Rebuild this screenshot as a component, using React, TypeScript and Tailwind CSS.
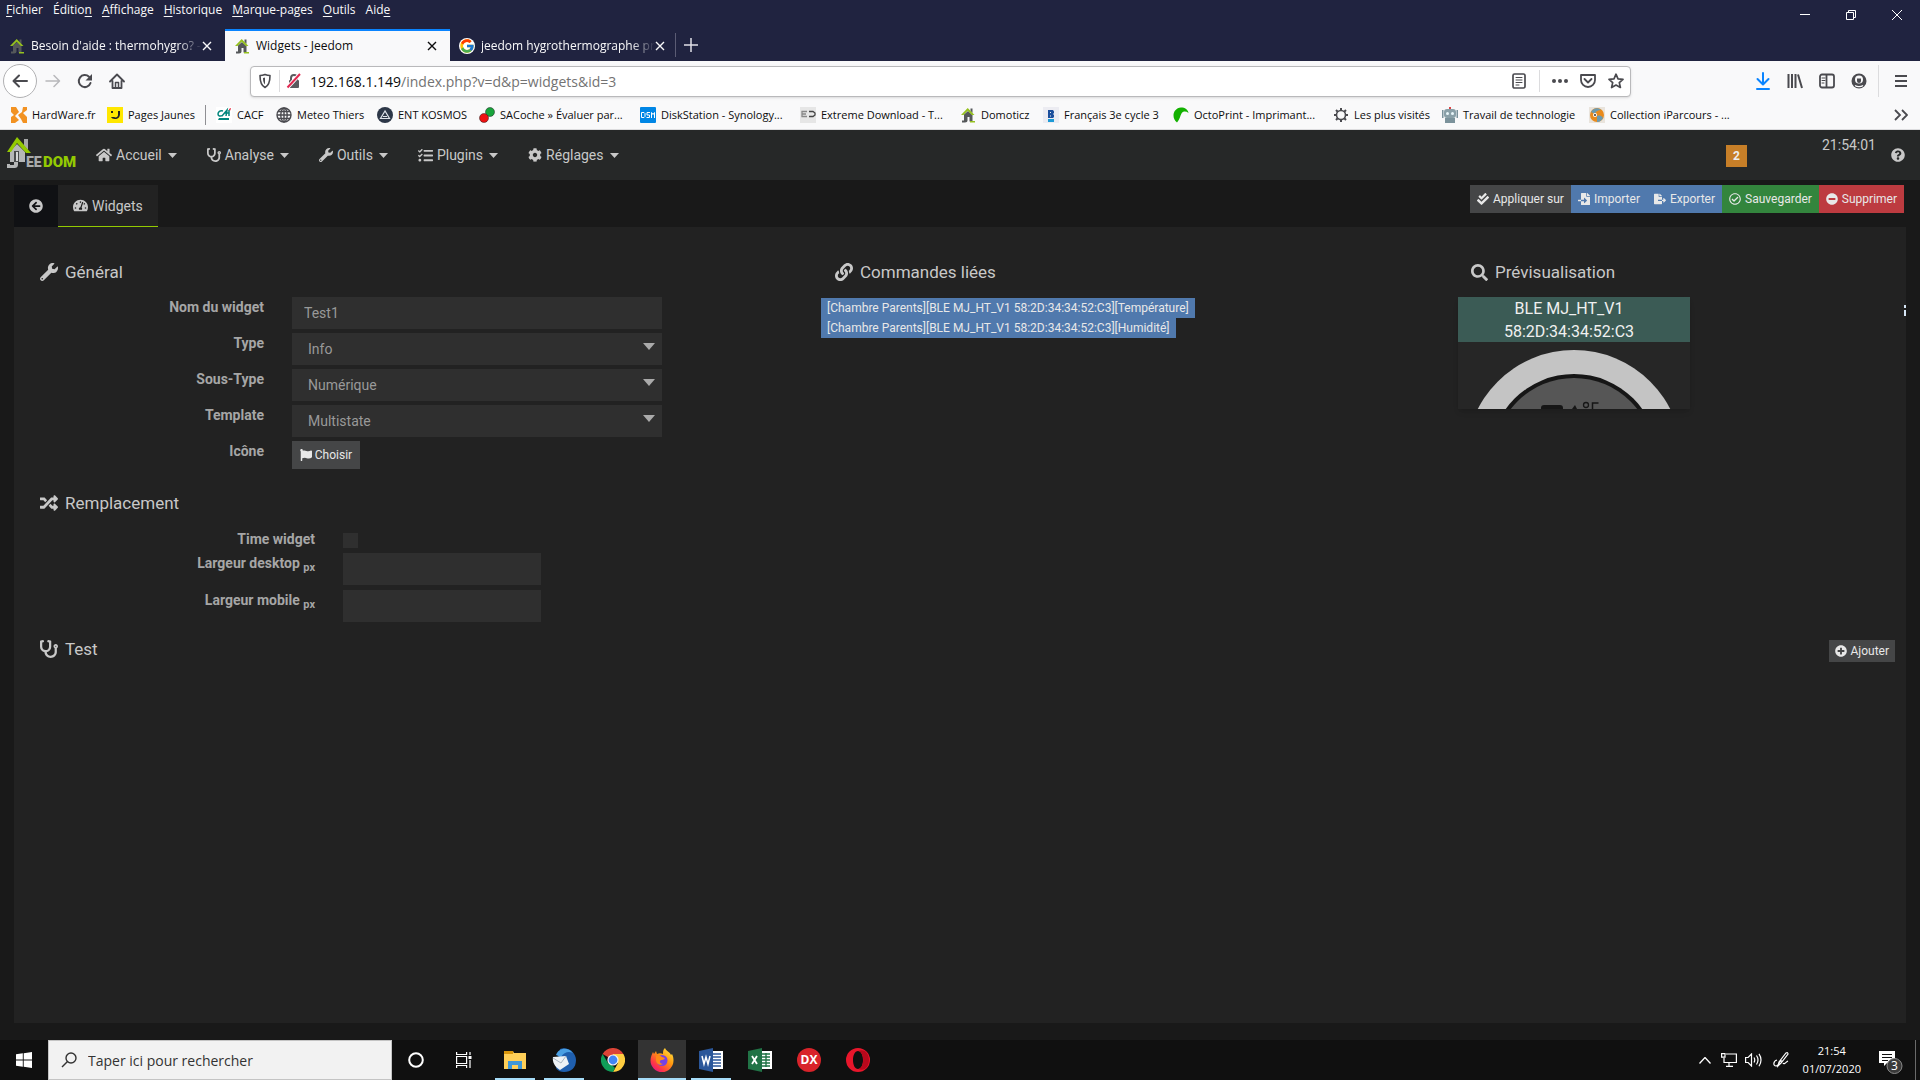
import type { ReactNode } from 'react'
import {
  FaArrowCircleLeft, FaCheckDouble, FaCog, FaFileExport, FaFileImport, FaFlag, FaHome, FaLink, FaMinusCircle,
  FaPlusCircle, FaQuestionCircle, FaRandom, FaRegCheckCircle, FaSearch, FaStethoscope, FaTachometerAlt, FaTasks, FaWrench,
} from 'react-icons/fa'
import { FcGoogle } from 'react-icons/fc'

const ui = "font-['Open_Sans','Noto_Sans',sans-serif]"
const roboto = "font-['Roboto',sans-serif]"
const field = 'h-8 bg-[#2f2f2f] text-sm text-[#999] outline-none'
const label = 'pt-0.5 text-right text-sm leading-4 font-bold text-[#a6a6a6]'
const svgLine = { fill: 'none', stroke: 'currentColor', strokeWidth: 2, strokeLinecap: 'round', strokeLinejoin: 'round' } as const

/* ---------- small drawings ---------- */

function JeedomHouse() {
  return (
    <svg width="16" height="16" viewBox="0 0 16 16" className="shrink-0">
      <path d="M10.5 1.5h2V6l-2-2z" fill="#55585a" />
      <path d="M4 7.5 8 4l4.5 4v6.5H9.5V10h-2v3.5c0 1.3-1 2-2.5 2H2v-2h2z" fill="#55585a" />
      <path d="M1 8 7.7 1l6.8 7h-2.6L7.7 3.8 3.5 8z" fill="#95c11f" />
      <path d="M10 14h5v1.5h-5z" fill="#95c11f" />
    </svg>
  )
}

function JeedomLogo() {
  return (
    <svg width="70" height="42" viewBox="0 0 70 42" role="img" aria-label="Jeedom">
      <path d="M18 5h4v11l-4-4z" fill="#a6a8a8" />
      <path d="M4 17 11 10l8 8v10H4z" fill="#b5b7b7" />
      <path d="M8 17h5v11H8z" fill="#4a4c4c" />
      <path d="M10 18h2v9h-2z" fill="#d5d7d7" />
      <path d="M8 28h4v2c0 3-1 4-4 4H1v-4h3v1h3c1 0 1-.5 1-1z" fill="#b5b7b7" />
      <path d="M1 18 11 3l14 16h-5l-9-10-6 9z" fill="#93ca02" />
      <text x="20" y="33" fontSize="14" fontWeight="900" fontFamily="Roboto, sans-serif" fill="#a9abab">EE</text>
      <text x="37" y="33" fontSize="15" fontWeight="900" fontFamily="Roboto, sans-serif" fill="#93ca02">DOM</text>
    </svg>
  )
}

function CloseIcon() {
  return (
    <svg width="10" height="10" viewBox="0 0 10 10">
      <path d="M1 1l8 8M9 1 1 9" stroke="currentColor" strokeWidth="1.4" fill="none" />
    </svg>
  )
}

/* ---------- Firefox window ---------- */

const menus = [
  ['', 'F', 'ichier'], ['Éditio', 'n', ''], ['', 'A', 'ffichage'], ['', 'H', 'istorique'],
  ['', 'M', 'arque-pages'], ['', 'O', 'utils'], ['Aid', 'e', ''],
]

function TitleBar() {
  return (
    <div className="flex h-[29px] items-start justify-between pl-1.5">
      <nav className="flex gap-2.5 pt-0.5 text-[12px] leading-4 text-[#f9f9fa]">
        {menus.map(([a, b, c]) => (
          <button key={a + b + c} type="button">{a}<u className="underline-offset-2">{b}</u>{c}</button>
        ))}
      </nav>
      <div className="flex text-white">
        <button type="button" aria-label="Réduire" className="flex h-[29px] w-[46px] items-center justify-center">
          <svg width="10" height="10" viewBox="0 0 10 10"><path d="M0 4.5h10" stroke="currentColor" /></svg>
        </button>
        <button type="button" aria-label="Restaurer" className="flex h-[29px] w-[46px] items-center justify-center">
          <svg width="10" height="10" viewBox="0 0 10 10"><path d="M.5 2.5h7v7h-7zM2.5 2.5v-2h7v7h-2" fill="none" stroke="currentColor" /></svg>
        </button>
        <button type="button" aria-label="Fermer" className="flex h-[29px] w-[46px] items-center justify-center">
          <svg width="10" height="10" viewBox="0 0 10 10"><path d="M0 0l10 10M10 0 0 10" stroke="currentColor" /></svg>
        </button>
      </div>
    </div>
  )
}

function Tab({ icon, title, active }: { icon: ReactNode; title: string; active?: boolean }) {
  return (
    <div className={`flex h-8 w-[225px] items-center border-t-2 pr-[13px] pl-[9px] text-[12px] ${active ? 'border-[#0a84ff] bg-[#f9f9fa] text-[#0c0c0d]' : 'border-transparent text-[#f9f9fa]'}`}>
      {icon}
      <span className={`ml-1.5 flex-1 whitespace-nowrap ${active ? '' : '[mask-image:linear-gradient(to_left,transparent,black_24px)]'}`}>{title}</span>
      <button type="button" aria-label="Fermer l'onglet"><CloseIcon /></button>
    </div>
  )
}

function TabStrip() {
  return (
    <div className="flex h-8 items-center">
      <Tab icon={<JeedomHouse />} title="Besoin d'aide : thermohygro? -" />
      <Tab icon={<JeedomHouse />} title="Widgets - Jeedom" active />
      <Tab icon={<FcGoogle size={16} className="shrink-0 rounded-full bg-white" />} title="jeedom hygrothermographe pr" />
      <div className="h-6 w-px bg-[#5b5c74]" />
      <button type="button" aria-label="Nouvel onglet" className="px-2 text-[#e0e0e6]">
        <svg width="14" height="14" viewBox="0 0 14 14"><path d="M7 0v14M0 7h14" stroke="currentColor" strokeWidth="1.5" /></svg>
      </button>
    </div>
  )
}

function NavBar() {
  return (
    <div className="flex h-10 items-center bg-[#f9f9fa] text-[#4a4a4f]">
      <div className="flex w-[250px] shrink-0 items-center pl-[3px]">
        <button type="button" aria-label="Précédent" className="flex size-[34px] items-center justify-center rounded-full border border-[#b1b1b3] bg-white">
          <svg width="16" height="16" viewBox="0 0 16 16" {...svgLine}><path d="M15 8H2M7 2.5 1.5 8 7 13.5" /></svg>
        </button>
        <button type="button" aria-label="Suivant" className="flex w-8 items-center justify-center text-[#b8b8bb]">
          <svg width="16" height="16" viewBox="0 0 16 16" {...svgLine} strokeWidth="1.5"><path d="M1 8h13M9 2.5 14.5 8 9 13.5" /></svg>
        </button>
        <button type="button" aria-label="Actualiser" className="flex w-8 items-center justify-center">
          <svg width="16" height="16" viewBox="0 0 16 16" {...svgLine}><path d="M13.5 10A6 6 0 1 1 12 3.8" /><path d="M15 1v6.5H8.5z" fill="currentColor" stroke="none" /></svg>
        </button>
        <button type="button" aria-label="Accueil" className="flex w-8 items-center justify-center">
          <svg width="16" height="16" viewBox="0 0 16 16" {...svgLine} strokeWidth="1.8"><path d="M1 8.5 8 1.5l7 7M3.5 8v7h9V8" /><path d="M6.5 14V9.5h3V14" strokeWidth="1.5" /></svg>
        </button>
      </div>

      <div className="flex h-[31px] flex-1 items-center rounded-sm border border-[#b9b9bb] bg-white shadow-sm">
        <svg width="16" height="16" viewBox="0 0 16 16" {...svgLine} strokeWidth="1.6" className="ml-1.5">
          <path d="M8 1.5c2 .8 3.5 1 5 1 0 6-1 10-5 12-4-2-5-6-5-12 1.5 0 3-.2 5-1z" /><path d="M8 4.5c-1 .4-1.5.4-2 .5 0 3 .5 5 2 6.5z" fill="currentColor" stroke="none" />
        </svg>
        <div className="mx-1.5 h-[22px] w-px bg-[#dcdcde]" />
        <svg width="16" height="16" viewBox="0 0 16 16">
          <rect x="3" y="7" width="10" height="8" rx="1" fill="#5a5a5e" />
          <path d="M5 7V5a3 3 0 0 1 6 0v2" fill="none" stroke="#5a5a5e" strokeWidth="2" />
          <path d="M1.5 14.5 14 1" stroke="#fff" strokeWidth="4" /><path d="M1.5 14.5 14 1" stroke="#e22850" strokeWidth="2" />
        </svg>
        <div className="ml-2 flex-1 text-[14px] text-[#737373]"><span className="text-[#0c0c0d]">192.168.1.149</span>/index.php?v=d&amp;p=widgets&amp;id=3</div>
        <svg width="16" height="16" viewBox="0 0 16 16" {...svgLine} strokeWidth="1.7"><rect x="2" y="1" width="12" height="14" rx="1.5" /><path d="M5 4.5h6M5 7h6M5 9.5h6M5 12h3" strokeWidth="1" /></svg>
        <div className="mx-3 h-[22px] w-px bg-[#dcdcde]" />
        <svg width="16" height="16" viewBox="0 0 16 16" fill="currentColor"><circle cx="2" cy="8" r="2" /><circle cx="8" cy="8" r="2" /><circle cx="14" cy="8" r="2" /></svg>
        <svg width="16" height="16" viewBox="0 0 16 16" {...svgLine} strokeWidth="1.8" className="ml-3"><path d="M1 2h14v5a7 7 0 0 1-14 0z" /><path d="M4.5 6 8 9.5 11.5 6" /></svg>
        <svg width="16" height="16" viewBox="0 0 16 16" {...svgLine} strokeWidth="1.7" className="mr-1.5 ml-3"><path d="m8 1.2 2 4.6 5 .5-3.7 3.3 1.1 4.9L8 12l-4.4 2.5 1.1-4.9L1 6.3l5-.5z" /></svg>
      </div>

      <div className="flex w-[289px] shrink-0 items-center justify-end gap-4 pr-3">
        <svg width="16" height="18" viewBox="0 0 16 18" {...svgLine} className="text-[#0a84ff]"><path d="M8 1v11M2.5 7 8 12.5 13.5 7M2 17h12" /></svg>
        <svg width="16" height="16" viewBox="0 0 16 16" {...svgLine} strokeLinecap="butt"><path d="M1.5 1v14M5 1v14M8.5 1v14M11 1.5 15 15" /></svg>
        <svg width="16" height="16" viewBox="0 0 16 16" {...svgLine} strokeWidth="1.8"><rect x="1" y="1.5" width="14" height="13" rx="2" /><path d="M7.5 2v12" /><path d="M3 5h3M3 7.5h3M3 10h2" strokeWidth="1" /></svg>
        <div className="flex items-center gap-[11px]">
          <svg width="16" height="16" viewBox="0 0 16 16"><circle cx="8" cy="8" r="7.5" fill="currentColor" /><circle cx="8" cy="6.5" r="4" fill="#f9f9fa" /><path d="M6 5.5h4V8a2 2 0 0 1-4 0z" fill="currentColor" /><path d="M4 12.5c2 1.5 6 1.5 8 0" fill="none" stroke="#f9f9fa" strokeWidth="1.4" /></svg>
          <div className="mr-1 h-8 w-px bg-[#dcdcde]" />
          <svg width="14" height="14" viewBox="0 0 14 14"><path d="M1 2h12M1 7h12M1 12h12" stroke="currentColor" strokeWidth="2" /></svg>
        </div>
      </div>
    </div>
  )
}

const bm = { width: 16, height: 16, viewBox: '0 0 16 16', className: 'shrink-0' }

const bookmarks: { name: string; w: string; icon: ReactNode }[] = [
  { name: 'HardWare.fr', w: 'w-24', icon: <svg {...bm}><path d="M0 0h5l3 5-4 4 4 4-4 3H0v-6l3-2-3-3zM16 0v3l-4 3 4 4v6h-4l-2-4-3-4 4-3 1-5z" fill="#f29222" /></svg> },
  { name: 'Pages Jaunes', w: 'w-[98px]', icon: <svg {...bm}><rect width="16" height="16" fill="#ffe700" /><path d="M4 4h2v2H4zM11 4h2v3c0 3-2 5-5 5-2 0-3.5-1-4-2h3c2 1 4 0 4-2z" fill="#222" /></svg> },
  { name: 'CACF', w: 'w-[60px]', icon: <svg {...bm}><rect width="16" height="16" fill="#fff" /><path d="M7 4c-3-1-5 1-5 3s2 3 5 1M6 9l5-6-1 6M8 6h5M13 3v6" fill="none" stroke="#00857c" strokeWidth="1.5" /><path d="M3 11h10v2H2z" fill="#00857c" /><path d="m13 2 2-1-1 3z" fill="#e2001a" /></svg> },
  { name: 'Meteo Thiers', w: 'w-[101px]', icon: <svg {...bm} fill="none" stroke="#4a4a4f" strokeWidth="1.4"><circle cx="8" cy="8" r="7" /><ellipse cx="8" cy="8" rx="3.2" ry="7" /><path d="M8 1v14M1 8h14M2 4.5h12M2 11.5h12" /></svg> },
  { name: 'ENT KOSMOS', w: 'w-[102px]', icon: <svg {...bm}><circle cx="8" cy="8" r="8" fill="#2d3748" /><path d="M8 4 3.5 11.5h9zM6 9.5h4" fill="none" stroke="#dfe3ea" strokeWidth="1.2" /></svg> },
  { name: 'SACoche » Évaluer par...', w: 'w-[161px]', icon: <svg {...bm}><circle cx="11" cy="5" r="4.5" fill="#18a43c" stroke="#222" strokeWidth=".5" /><circle cx="5" cy="11" r="4.5" fill="#ee1111" stroke="#222" strokeWidth=".5" /></svg> },
  { name: 'DiskStation - Synology...', w: 'w-40', icon: <svg {...bm}><rect width="16" height="16" rx="1" fill="#0086e5" /><path d="M1.5 5.5H4l1 1v3l-1 1H1.5zM10 5.5H7V8h2.5v2.5H6.5M11.5 11V5.5l1.5 2 1.5-2V11" fill="none" stroke="#fff" /></svg> },
  { name: 'Extreme Download - T...', w: 'w-40', icon: <svg {...bm}><rect width="16" height="16" fill="#e6e6e6" /><path d="M7 4.5H2v5h5M2 7h4" fill="none" stroke="#888" strokeWidth="1.3" /><path d="M9 4.5h4l2 1.5v2l-2 1.5H9" fill="none" stroke="#444" strokeWidth="1.3" /></svg> },
  { name: 'Domoticz', w: 'w-[83px]', icon: <JeedomHouse /> },
  { name: 'Français 3e cycle 3', w: 'w-[130px]', icon: <svg {...bm}><rect width="16" height="16" fill="#ececf2" /><path fillRule="evenodd" d="M5 3h5l1 1.5V6L10 7l1 1v2l-1 1H5zM7 5v1h1V5zM7 8.5v1h1v-1z" fill="#1c4f9c" /><path d="M5 12h6v3H5z" fill="#1d9ad6" /></svg> },
  { name: 'OctoPrint - Imprimant...', w: 'w-40', icon: <svg {...bm}><path d="M4 15.5C-2 11 0 1 8 .5c4 0 7 2 7.5 5.5-2.5-2-5.5-2-7 .5S7 12 4 15.5z" fill="#13b100" /></svg> },
  { name: 'Les plus visités', w: 'w-[109px]', icon: <svg {...bm} fill="none" stroke="#4a4a4f"><circle cx="8" cy="8" r="4.5" strokeWidth="1.6" /><path d="M8 1v2.5M8 12.5V15M1 8h2.5M12.5 8H15M3 3l1.7 1.7M11.3 11.3 13 13M13 3l-1.7 1.7M4.7 11.3 3 13" strokeWidth="2" /></svg> },
  { name: 'Travail de technologie', w: 'w-[147px]', icon: <svg {...bm}><rect x="2" y="2" width="12" height="9" rx="3" fill="#8aa0a8" /><path d="M0 3h1.5v8H0zM14.5 3H16v8h-1.5zM3 11h10v5H3z" fill="#7b929b" /><circle cx="5.5" cy="6.5" r="1.5" fill="#e9f6fa" /><circle cx="10.5" cy="6.5" r="1.5" fill="#e9f6fa" /><path d="M7 0h2v2H7z" fill="#d44" /></svg> },
  { name: 'Collection iParcours - ...', w: 'w-[150px]', icon: <svg {...bm}><rect width="16" height="16" fill="#e9e4dd" /><circle cx="8" cy="8" r="7" fill="#e98b1e" /><path d="M2 5c2-4 7-5 10-2-3 0-5 1-6 4zM8 9c3-1 5 0 6 2-1 2-3 4-6 4z" fill="#6d9bb0" /><circle cx="6" cy="8" r="2" fill="#fff" /><circle cx="6" cy="8" r="1" fill="#333" /></svg> },
]

function BookmarksBar() {
  return (
    <div className="flex h-[29px] items-center border-b border-[#dcdcde] bg-[#f9f9fa] pr-3 pl-[11px] text-[11px] text-[#0c0c0d]">
      {bookmarks.map((b, i) => (
        <div key={b.name} className="flex items-center">
          {i === 2 && <div className="mr-2.5 h-5 w-px bg-[#8f8f93]" />}
          <a href="#" className={`flex items-center gap-[5px] whitespace-nowrap ${b.w}`}>{b.icon}{b.name}</a>
        </div>
      ))}
      <svg width="14" height="12" viewBox="0 0 14 12" fill="none" stroke="#4a4a4f" strokeWidth="1.8" className="ml-auto"><path d="m1 1 5 5-5 5M8 1l5 5-5 5" /></svg>
    </div>
  )
}

/* ---------- Jeedom page ---------- */

const navItems = [
  { name: 'Accueil', icon: <FaHome size={16} /> },
  { name: 'Analyse', icon: <FaStethoscope size={14} /> },
  { name: 'Outils', icon: <FaWrench size={14} /> },
  { name: 'Plugins', icon: <FaTasks size={15} /> },
  { name: 'Réglages', icon: <FaCog size={14} /> },
]

function JeedomNav() {
  return (
    <header className="flex h-[50px] items-center bg-[#262828] pr-[15px] pl-1.5 text-[#c8c8c8]">
      <a href="#" className="mr-[5px]"><JeedomLogo /></a>
      <nav className="flex">
        {navItems.map((n) => (
          <button key={n.name} type="button" className="flex items-center gap-1 px-[15px] text-sm">
            {n.icon}{n.name}
            <svg width="9" height="5" viewBox="0 0 9 5" className="ml-0.5"><path d="M0 0h9L4.5 5z" fill="currentColor" /></svg>
          </button>
        ))}
      </nav>
      <span className="mt-0.5 mr-[75px] ml-auto flex h-[22px] w-[21px] items-center justify-center bg-[#c77f28] text-xs font-bold text-[#eee]">2</span>
      <span className="mr-[15px] pb-5 text-sm">21:54:01</span>
      <FaQuestionCircle size={14} />
    </header>
  )
}

const actions = [
  { name: 'Appliquer sur', bg: 'bg-[#454647]', icon: <FaCheckDouble size={12} /> },
  { name: 'Importer', bg: 'bg-[#5079ad]', icon: <FaFileImport size={12} /> },
  { name: 'Exporter', bg: 'bg-[#5079ad]', icon: <FaFileExport size={12} /> },
  { name: 'Sauvegarder', bg: 'bg-[#33853d]', icon: <FaRegCheckCircle size={12} /> },
  { name: 'Supprimer', bg: 'bg-[#bd3b40]', icon: <FaMinusCircle size={12} /> },
]

function Legend({ icon, children }: { icon: ReactNode; children: ReactNode }) {
  return <h2 className="flex items-center gap-[7px] text-[17px] leading-6 text-[#c8c8c8]">{icon}{children}</h2>
}

function SelectRow({ id, name, value }: { id: string; name: string; value: string }) {
  return (
    <>
      <label htmlFor={id} className={label}>{name}</label>
      <div className="relative">
        <select id={id} defaultValue={value} className={`${field} w-full appearance-none px-4`}><option>{value}</option></select>
        <svg width="12" height="7" viewBox="0 0 12 7" className="pointer-events-none absolute top-2.5 right-[7px]"><path d="M0 0h12L6 7z" fill="#aaa" /></svg>
      </div>
    </>
  )
}

function Preview() {
  return (
    <div className="w-[232px] bg-[#262626] shadow-md">
      <div className="h-[45px] bg-[#3b5b55] pr-2.5 text-center text-base leading-[23px] text-[#f0f0f0]">BLE MJ_HT_V1<br />58:2D:34:34:52:C3</div>
      <svg width="232" height="67" viewBox="0 0 232 67" className="block">
        <circle cx="116" cy="116" r="108" fill="#c4c4c4" />
        <circle cx="116" cy="116" r="84" fill="#161616" />
        <circle cx="116" cy="116" r="80" fill="#565656" />
        <path d="M83 67v-1q0-3 3-3h16q3 0 3 3v1zM114 67l3-4 2 4z" fill="#161616" />
        <circle cx="128" cy="63" r="2.5" fill="none" stroke="#161616" strokeWidth="1.3" />
        <path d="M134.5 67v-6h6" fill="none" stroke="#161616" strokeWidth="1.5" />
      </svg>
    </div>
  )
}

function WidgetPage() {
  return (
    <main className={`flex flex-1 flex-col bg-[#191919] px-3.5 pt-[5px] pb-[17px] ${roboto}`}>
      <div className="flex items-start">
        <button type="button" aria-label="Retour" className="flex h-[42px] w-11 items-center justify-center bg-[#101114] text-[#c8c8c8]"><FaArrowCircleLeft size={14} /></button>
        <a href="#" className="flex h-[42px] items-center gap-1 border-b border-[#93ca02] bg-[#222] px-[15px] text-sm text-[#c8c8c8]"><FaTachometerAlt size={15} />Widgets</a>
        <div className="ml-auto flex pr-0.5">
          {actions.map((a) => (
            <button key={a.name} type="button" className={`flex h-7 items-center gap-1 px-[7px] text-xs text-[#e8e8e8] ${a.bg}`}>{a.icon}{a.name}</button>
          ))}
        </div>
      </div>

      <div className="flex-1 bg-[#222] pt-[33px]">
        <div className="grid grid-cols-[807fr_637fr_448fr]">
          <form onSubmit={(e) => e.preventDefault()}>
            <div className="pl-[26px]"><Legend icon={<FaWrench size={18} />}>Général</Legend></div>
            <div className="mt-[13px] grid grid-cols-[250px_370px] gap-x-7 gap-y-1">
              <label htmlFor="name" className={label}>Nom du widget</label>
              <input id="name" defaultValue="Test1" className={`${field} px-3`} />
              <SelectRow id="type" name="Type" value="Info" />
              <SelectRow id="subtype" name="Sous-Type" value="Numérique" />
              <SelectRow id="template" name="Template" value="Multistate" />
              <label htmlFor="icon" className={label}>Icône</label>
              <button id="icon" type="button" className="flex h-7 w-[68px] items-center justify-center gap-[3px] bg-[#454647] text-xs text-[#e8e8e8]"><FaFlag size={12} />Choisir</button>
            </div>

            <div className="mt-[22px] pl-[26px]"><Legend icon={<FaRandom size={18} />}>Remplacement</Legend></div>
            <div className="mt-3.5 grid grid-cols-[301px_198px] gap-x-7 gap-y-[5px]">
              <label htmlFor="time" className={label}>Time widget</label>
              <input id="time" type="checkbox" className="mt-1 size-[15px] appearance-none bg-[#2f2f2f]" />
              <label htmlFor="desktop" className={label}>Largeur desktop <sub className="text-[11px]">px</sub></label>
              <input id="desktop" className={`${field} px-3`} />
              <label htmlFor="mobile" className={label}>Largeur mobile <sub className="text-[11px]">px</sub></label>
              <input id="mobile" className={`${field} px-3`} />
            </div>
          </form>

          <section>
            <div className="pl-3.5"><Legend icon={<FaLink size={18} />}>Commandes liées</Legend></div>
            <div className="mt-3.5 flex flex-col items-start text-xs leading-5 text-[#e8e8e8]">
              <span className="bg-[#5079ad] px-1.5">[Chambre Parents][BLE MJ_HT_V1 58:2D:34:34:52:C3][Température]</span>
              <span className="bg-[#5079ad] px-1.5">[Chambre Parents][BLE MJ_HT_V1 58:2D:34:34:52:C3][Humidité]</span>
            </div>
          </section>

          <section>
            <div className="pl-[13px]"><Legend icon={<FaSearch size={17} />}>Prévisualisation</Legend></div>
            <div className="mt-[13px] flex items-start justify-between">
              <Preview />
              <svg width="2" height="11" viewBox="0 0 2 11" className="mt-2"><path d="M0 0h2v3H0zM0 5h2v6H0z" fill="#d6e6f5" /></svg>
            </div>
          </section>
        </div>

        <div className="mt-3.5 flex items-center justify-between pr-[11px] pl-[26px]">
          <Legend icon={<FaStethoscope size={18} />}>Test</Legend>
          <button type="button" className="mt-1 flex h-[22px] items-center gap-[3px] bg-[#454647] px-1.5 text-xs text-[#e8e8e8]"><FaPlusCircle size={12} />Ajouter</button>
        </div>
      </div>
    </main>
  )
}

/* ---------- Windows taskbar ---------- */

const tb = { width: 24, height: 24, viewBox: '0 0 24 24' }

const apps: { name: string; state?: 'open' | 'active'; icon: ReactNode }[] = [
  { name: 'Explorateur', state: 'open', icon: <svg {...tb}><path d="M1 3h9l1 2h12v16H1z" fill="#ffcf58" /><path d="M1 3h9v3H1z" fill="#d9960c" /><path d="M5 13h14v8h-4v-4H9v4H5z" fill="#3f97d8" /></svg> },
  {
    name: 'Thunderbird', state: 'open', icon: (
      <svg {...tb}>
        <path d="M8 1C15-2 24 4 24 12s-5 12-12 12c-3 0-6-1-8-4z" fill="#1f5fae" />
        <path d="M4 7C6 0 16-2 21 5c-4-2-9-1-12 4z" fill="#4a9fe3" />
        <path d="m1 9 13-1 3 8-9 6C3 19 0 14 1 9z" fill="#eef2f6" /><path d="m1 10 8 5 5-7" fill="none" stroke="#a9b6c2" />
      </svg>
    ),
  },
  {
    name: 'Chrome', icon: (
      <svg {...tb}>
        <path d="M12 12 1.6 6A12 12 0 0 1 22.4 6z" fill="#db4437" />
        <path d="M12 12V6h10.4A12 12 0 0 1 12 24l5-9z" fill="#ffcd40" />
        <path d="M1.6 6 7 15l5 3 2 2-2 4A12 12 0 0 1 1.6 6z" fill="#0f9d58" />
        <circle cx="12" cy="12" r="5.6" fill="#f4f4f4" /><circle cx="12" cy="12" r="4.4" fill="#4285f4" />
      </svg>
    ),
  },
  {
    name: 'Firefox', state: 'active', icon: (
      <svg {...tb}>
        <defs><linearGradient id="fx" x1="1" y1="0" x2=".2" y2="1"><stop offset="0" stopColor="#fff44f" /><stop offset=".45" stopColor="#ff980e" /><stop offset=".8" stopColor="#ff3647" /><stop offset="1" stopColor="#e31587" /></linearGradient></defs>
        <path d="M15 0c1 3 5 4 6 7l1-1c1 2 1.5 4 1.5 6.5A11.5 11.5 0 0 1 .5 12.5C.5 9 2 6 3 4l1 2 2-3 1 3c2-1 4-1 6 0 0-3 0-4 2-6z" fill="url(#fx)" />
        <circle cx="12" cy="12.5" r="5.5" fill="#7542e5" /><path d="M6 8c3-1 5 0 6 1l3 1c-1 2-3 2-4 2-2 1-1 4 2 4-3 2-7 0-7-4z" fill="#ff8a16" />
      </svg>
    ),
  },
  { name: 'Word', state: 'open', icon: <svg {...tb}><path d="M12 3h12v18H12z" fill="#fff" /><path d="M14 6h8M14 9h8M14 12h8M14 15h8M14 18h8" stroke="#2b579a" strokeWidth="1.4" /><path d="M0 3 14 0v24L0 21z" fill="#2b579a" /><path d="m3 8 2 8 2-7 2 7 2-8" fill="none" stroke="#fff" strokeWidth="1.5" /></svg> },
  { name: 'Excel', icon: <svg {...tb}><path d="M12 3h12v18H12z" fill="#fff" /><path d="M14 6h8M14 9h8M14 12h8M14 15h8M14 18h8M18 5v14" stroke="#217346" strokeWidth="1.4" /><path d="M0 3 14 0v24L0 21z" fill="#217346" /><path d="m4 8 5 8M9 8l-5 8" stroke="#fff" strokeWidth="1.8" /></svg> },
  { name: 'DX', icon: <svg {...tb}><circle cx="12" cy="12" r="12" fill="#d8232a" /><text x="12" y="16" textAnchor="middle" fontSize="12" fontWeight="700" fontFamily="Open Sans, sans-serif" fill="#fff">DX</text></svg> },
  { name: 'Opera', icon: <svg {...tb}><path fillRule="evenodd" d="M12 0a12 12 0 1 0 0 24 12 12 0 0 0 0-24zm0 3c3 0 5 4 5 9s-2 9-5 9-5-4-5-9 2-9 5-9z" fill="#e8162b" /><path d="M12 3c7-3 11 3 11 9s-4 12-11 9c7-1 7-17 0-18z" fill="#b8081c" /></svg> },
]

function Taskbar() {
  return (
    <footer className={`flex h-10 items-center bg-[#101010] text-white ${ui}`}>
      <button type="button" aria-label="Démarrer" className="flex h-10 w-12 items-center justify-center">
        <svg width="16" height="16" viewBox="0 0 16 16" fill="#fff"><path d="M0 2.2 6.8 1.3v6.2H0zM7.7 1.2 16 0v7.5H7.7zM0 8.4h6.8v6.3L0 13.8zM7.7 8.4H16V16l-8.3-1.2z" /></svg>
      </button>
      <label className="flex h-10 w-[344px] items-center gap-[11px] border border-[#c4c4c4] bg-[#f2f2f2] px-3 text-[#333]">
        <svg width="16" height="16" viewBox="0 0 16 16" fill="none" stroke="currentColor" strokeWidth="1.4"><circle cx="10" cy="6" r="5" /><path d="M6.5 9.5 1 15" /></svg>
        <input aria-label="Rechercher" placeholder="Taper ici pour rechercher" className="flex-1 bg-transparent text-[14px] outline-none placeholder:text-[#333]" />
      </label>
      <button type="button" aria-label="Cortana" className="flex h-10 w-12 items-center justify-center">
        <svg width="16" height="16" viewBox="0 0 16 16" fill="none" stroke="#fff" strokeWidth="2"><circle cx="8" cy="8" r="6.8" /></svg>
      </button>
      <button type="button" aria-label="Vue des tâches" className="flex h-10 w-12 items-center justify-center">
        <svg width="16" height="16" viewBox="0 0 16 16" fill="none" stroke="#fff" strokeWidth="1.2"><path d="M.6 0v2.5h10V0M.6 16v-2.5h10V16M.6 4.5h10v7H.6zM14 0v3M14 8v8" /><path d="M12.5 4h3v3h-3z" fill="#fff" stroke="none" /></svg>
      </button>
      <div className="flex pl-0.5">
        {apps.map((a) => (
          <button key={a.name} type="button" aria-label={a.name} className="flex w-[49px] justify-center">
            <span className={`flex h-10 items-center justify-center border-t-2 border-b-2 border-t-transparent ${a.state === 'active' ? 'w-12 border-b-[#a6dcf8] bg-[#333]' : a.state === 'open' ? 'w-10 border-b-[#a6dcf8]' : 'w-10 border-b-transparent'}`}>{a.icon}</span>
          </button>
        ))}
      </div>
      <div className="ml-auto flex h-10 items-center">
        <svg width="12" height="7" viewBox="0 0 12 7" fill="none" stroke="#fff" strokeWidth="1.3"><path d="m.5 6.5 5.5-6 5.5 6" /></svg>
        <svg width="16" height="14" viewBox="0 0 16 14" fill="none" stroke="#fff" strokeWidth="1.2" className="ml-2.5"><path d="M5 1h10.4v8.5H3V5M8 10v3M5 13.4h7M.6.6H4v3.5H.6z" /></svg>
        <svg width="17" height="14" viewBox="0 0 17 14" fill="none" stroke="#fff" strokeWidth="1.2" className="ml-2"><path d="M.6 4.5h2.5L6.5 1v12L3.1 9.5H.6zM9 4.5q1.5 2.5 0 5M11.5 2.5q3 4.500 0 9M14 .8q4 6 0 12.4" /></svg>
        <svg width="17" height="16" viewBox="0 0 17 16" fill="none" stroke="#fff" strokeWidth="1.2" className="ml-[11px]"><path d="M4 8c-4 1-4 6-1 6 4 0 2-6 6-5M5 14l1-4 7-9q2-1 2 1l-7 9zM10 11c1 2 3-1 5-2" /></svg>
        <div className="ml-[13px] text-center text-[11px] leading-[18px]">21:54<br />01/07/2020</div>
        <svg width="25" height="25" viewBox="0 0 25 25" className="mt-1 ml-[17px]">
          <path d="M1 1h16v12H9l-3 3v-3H1z" fill="#fff" /><path d="M4 4.5h10M4 7.5h10M4 10.5h6" stroke="#101010" />
          <circle cx="16.5" cy="16" r="7.5" fill="#3a3a3a" stroke="#8a8a8a" /><text x="16.5" y="20" textAnchor="middle" fontSize="12" fontFamily="Open Sans, sans-serif" fill="#fff">3</text>
        </svg>
        <div className="mr-1 ml-3 h-10 w-px bg-[#6a6a6a]" />
      </div>
    </footer>
  )
}

export default function App() {
  return (
    <div className={`flex min-h-screen flex-col ${ui}`}>
      <div className="bg-[#202340]">
        <TitleBar />
        <TabStrip />
      </div>
      <NavBar />
      <BookmarksBar />
      <div className={`flex flex-1 flex-col ${roboto}`}>
        <JeedomNav />
        <WidgetPage />
      </div>
      <Taskbar />
    </div>
  )
}
